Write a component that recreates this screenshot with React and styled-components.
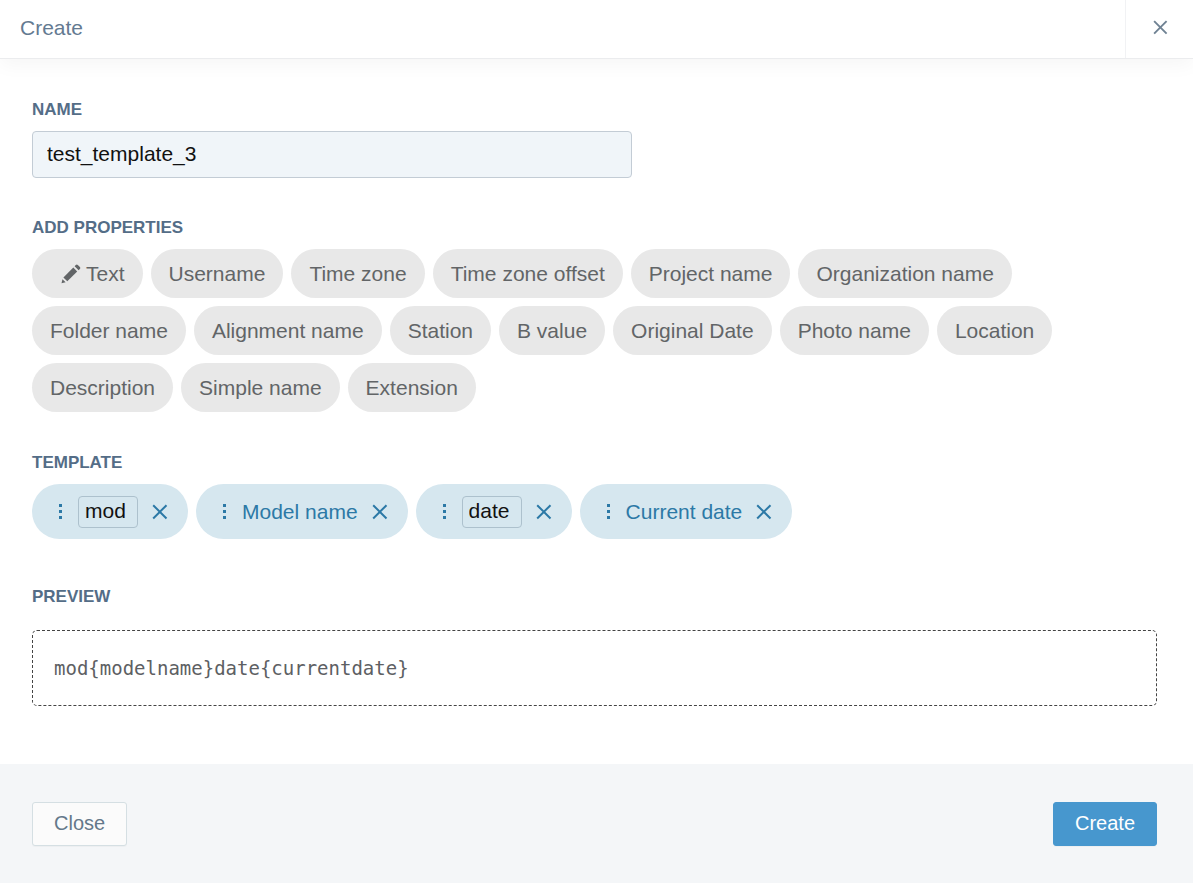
import React, { useState } from 'react'
import styled, { createGlobalStyle } from 'styled-components'

const GlobalStyle = createGlobalStyle`
    * {
        box-sizing: border-box;
    }
    body {
        margin: 0;
        background: #fff;
        font-family: "Liberation Sans", Arial, sans-serif;
        font-size: 21px;
    }
    button, input {
        font: inherit;
    }
    button {
        cursor: pointer;
    }
`

const Dialog = styled.form`
    display: flex;
    flex-direction: column;
    min-height: 100vh;
`

const Header = styled.header`
    display: flex;
    align-items: stretch;
    justify-content: space-between;
    height: 59px;
    border-bottom: 1px solid #ebecee;
    box-shadow: 0 6px 18px rgba(0, 0, 0, 0.04);
`

const Title = styled.h1`
    margin: 0;
    padding-left: 20px;
    font-size: 21px;
    font-weight: normal;
    line-height: 56px;
    color: #647a91;
`

const HeaderClose = styled.button`
    display: flex;
    align-items: center;
    justify-content: center;
    width: 68px;
    padding: 0 0 4px 2px;
    border: none;
    border-left: 1px solid #f1f2f4;
    background: none;
    color: #6f8293;
`

const Body = styled.main`
    display: flex;
    flex-direction: column;
    flex: 1;
    padding: 39px 36px 58px 32px;
`

const Section = styled.section`
    margin-bottom: ${props => props.$space || 0}px;
`

const labelStyle = `
    display: block;
    margin: 0 0 9px;
    font-size: 17px;
    font-weight: bold;
    line-height: 24px;
    color: #546d87;
    text-transform: uppercase;
`

const Label = styled.label`
    ${labelStyle}
`

const SectionTitle = styled.h2`
    ${labelStyle}
`

const NameInput = styled.input`
    display: block;
    width: 100%;
    max-width: 600px;
    height: 47px;
    padding: 0 14px 2px;
    border: 1px solid #c3ccd5;
    border-radius: 4px;
    background: #f0f5f9;
    color: #111;
`

const ChipList = styled.div`
    display: flex;
    flex-wrap: wrap;
    gap: 8px;
`

const PropertyChip = styled.button`
    display: flex;
    align-items: center;
    height: 49px;
    padding: 0 18px;
    border: none;
    border-radius: 25px;
    background: #e8e8e8;
    color: #626567;

    svg {
        margin: 0 4px 0 10px;
    }
`

const TemplateChip = styled.div`
    display: flex;
    align-items: center;
    height: 55px;
    padding: 0 20px;
    border-radius: 28px;
    background: #d6e7ef;
    color: #2c79a6;
`

const Grip = styled.svg`
    margin-right: 10px;
    cursor: grab;
`

const ChipInput = styled.input`
    width: 60px;
    height: 32px;
    padding: 0 6px 2px;
    border: 1px solid #adc1cd;
    border-radius: 4px;
    background: transparent;
    color: #111;
`

const RemoveButton = styled.button`
    display: flex;
    margin-left: 14px;
    padding: 0;
    border: none;
    background: none;
    color: inherit;
`

const Preview = styled.output`
    display: block;
    margin-top: 21px;
    padding: 25px 21px;
    border: 1px dashed #444;
    border-radius: 5px;
    font-family: "DejaVu Sans Mono", monospace;
    font-size: 19px;
    line-height: 24px;
    color: #5d6063;
    overflow-wrap: anywhere;
`

const Footer = styled.footer`
    display: flex;
    align-items: flex-start;
    justify-content: space-between;
    padding: 38px 36px 37px 32px;
    background: #f4f6f8;
`

const FooterButton = styled.button`
    height: 44px;
    padding: 0 21px 2px;
    border: 1px solid ${props => props.$primary ? '#4797ce' : '#d5dfe3'};
    border-radius: 3px;
    background: ${props => props.$primary ? '#4797ce' : '#fbfbfb'};
    box-shadow: 0 1px 1px rgba(0, 0, 0, 0.03);
    font-size: 20px;
    color: ${props => props.$primary ? '#fff' : '#64788a'};
`

const properties = [
    'Username', 'Time zone', 'Time zone offset', 'Project name', 'Organization name',
    'Folder name', 'Alignment name', 'Station', 'B value', 'Original Date', 'Photo name',
    'Location', 'Description', 'Simple name', 'Extension',
]

const initialParts = [
    { id: 1, type: 'text', value: 'mod' },
    { id: 2, type: 'property', value: 'Model name' },
    { id: 3, type: 'text', value: 'date' },
    { id: 4, type: 'property', value: 'Current date' },
]

function CrossIcon({ size, stroke }) {
    return (
        <svg width={size} height={size} viewBox="0 0 16 16" aria-hidden="true">
            <path d="M1.2 1.2L14.5 14.5M14.5 1.2L1.2 14.5" stroke="currentColor" strokeWidth={stroke} fill="none" />
        </svg>
    )
}

function PencilIcon() {
    return (
        <svg width="22" height="22" viewBox="0 0 22 22" fill="currentColor" aria-hidden="true">
            <path d="M1.5 20.3L2.5 16.2L5.6 19.3Z" />
            <path d="M3.4 14.4L13.3 4.5L17.2 8.4L7.3 18.3Z" />
            <path d="M14.6 3.2L15.8 2Q16.8 1 17.8 2L19.9 4.1Q20.9 5.1 19.9 6.1L18.6 7.2Z" />
        </svg>
    )
}

function GripIcon() {
    return (
        <Grip width="16" height="16" viewBox="0 0 16 16" fill="currentColor" aria-hidden="true">
            <path d="M7 0h3v3h-3zM7 6h3v3h-3zM7 12h3v3h-3z" />
        </Grip>
    )
}

export default function App() {

    const [name, setName] = useState('test_template_3')
    const [parts, setParts] = useState(initialParts)

    const addPart = (type, value) => {
        setParts([...parts, { id: Date.now(), type, value }])
    }
    const removePart = id => {
        setParts(parts.filter(p => p.id !== id))
    }
    const changePart = (id, value) => {
        setParts(parts.map(p => p.id === id ? { ...p, value } : p))
    }

    const preview = parts.map(p => {
        return p.type === 'text' ? p.value : `{${p.value.replace(/ /g, '').toLowerCase()}}`
    }).join('')

    return (
        <Dialog onSubmit={e => e.preventDefault()}>
            <GlobalStyle />
            <Header>
                <Title>Create</Title>
                <HeaderClose type="button" aria-label="Close dialog">
                    <CrossIcon size={15} stroke={2} />
                </HeaderClose>
            </Header>
            <Body>
                <Section $space={38}>
                    <Label htmlFor="name">Name</Label>
                    <NameInput id="name" value={name} onChange={e => setName(e.target.value)} />
                </Section>
                <Section $space={39}>
                    <SectionTitle>Add properties</SectionTitle>
                    <ChipList>
                        <PropertyChip type="button" onClick={() => addPart('text', '')}>
                            <PencilIcon />
                            Text
                        </PropertyChip>
                        {properties.map(p => (
                            <PropertyChip key={p} type="button" onClick={() => addPart('property', p)}>{p}</PropertyChip>
                        ))}
                    </ChipList>
                </Section>
                <Section $space={46}>
                    <SectionTitle>Template</SectionTitle>
                    <ChipList>
                        {parts.map(p => (
                            <TemplateChip key={p.id}>
                                <GripIcon />
                                {p.type === 'text'
                                    ? <ChipInput aria-label="Text" value={p.value} onChange={e => changePart(p.id, e.target.value)} />
                                    : <span>{p.value}</span>}
                                <RemoveButton type="button" aria-label={`Remove ${p.value}`} onClick={() => removePart(p.id)}>
                                    <CrossIcon size={16} stroke={2} />
                                </RemoveButton>
                            </TemplateChip>
                        ))}
                    </ChipList>
                </Section>
                <Section>
                    <SectionTitle>Preview</SectionTitle>
                    <Preview>{preview}</Preview>
                </Section>
            </Body>
            <Footer>
                <FooterButton type="button">Close</FooterButton>
                <FooterButton type="submit" $primary>Create</FooterButton>
            </Footer>
        </Dialog>
    )
}
